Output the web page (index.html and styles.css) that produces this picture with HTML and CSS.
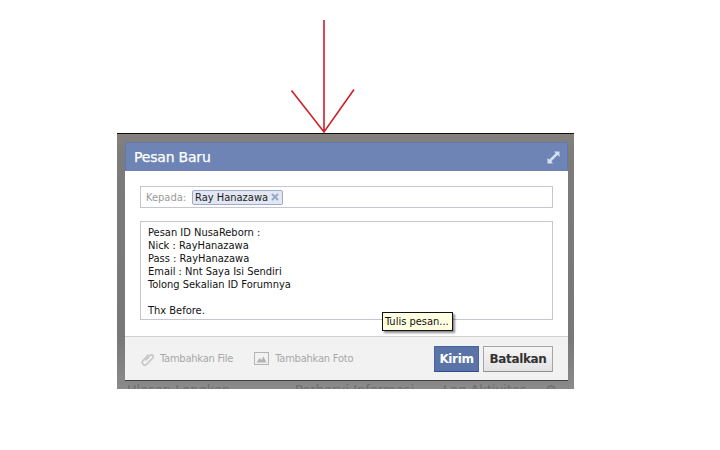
FILE: index.html
```html
<!DOCTYPE html>
<html lang="id">
<head>
<meta charset="utf-8">
<title>Pesan Baru</title>
<link rel="stylesheet" href="styles.css">
</head>
<body>
<svg class="arrow" width="720" height="140" viewBox="0 0 720 140">
  <path d="M324 20V132M291.500 90.500L324 132L354 89.500" fill="none" stroke="#cf1f28" stroke-width="1.600"/>
</svg>
<div class="backdrop">
  <div class="ghost"><span class="g1">Ulasan Lengkap</span><span class="g2">Perbarui Informasi</span><span class="g3">Log Aktivitas</span><span class="g4">&#9881;</span></div>
  <div class="dialog">
    <div class="head">
      <span class="title">Pesan Baru</span>
      <svg class="expand" width="13" height="13" viewBox="0 0 13 13">
        <path d="M7 0.500H12.500V6L10.600 4.100L4.400 10.300L6 12.500H0.500V7L2.400 8.600L8.700 2.300Z" fill="#d4dff2"/>
      </svg>
    </div>
    <div class="body">
      <div class="to">
        <span class="to-label">Kepada:</span>
        <span class="token">Ray Hanazawa<svg class="x" width="8" height="8" viewBox="0 0 8 8"><path d="M1 1L7 7M7 1L1 7" stroke="#98a8c6" stroke-width="2"/></svg></span>
      </div>
      <div class="msg">
        <div>Pesan ID NusaReborn :</div>
        <div>Nick : RayHanazawa</div>
        <div>Pass : RayHanazawa</div>
        <div>Email : Nnt Saya Isi Sendiri</div>
        <div>Tolong Sekalian ID Forumnya</div>
        <div class="blank"></div>
        <div>Thx Before.</div>
      </div>
    </div>
    <div class="foot">
      <span class="attach">
        <svg width="14" height="14" viewBox="0 0 14 14"><path d="M4.500 8.500L9 3.500C10 2.400 11.500 2.600 12 3.500C12.500 4.400 12.300 5.300 11.500 6.200L6 12C4.700 13.300 3 13.200 2 12.200C1 11.200 1 9.700 2.200 8.400L7.500 2.500" fill="none" stroke="#c4c4c4" stroke-width="1.500"/></svg>
        Tambahkan File
      </span>
      <span class="attach photo">
        <svg width="15" height="13" viewBox="0 0 15 13"><rect x="0.500" y="0.500" width="14" height="12" fill="#f2f2f2" stroke="#b4b4b4"/><path d="M2.500 10.500L5.500 6L7.500 8L9.500 4.500L12.500 10.500Z" fill="#b4b4b4"/></svg>
        Tambahkan Foto
      </span>
      <span class="spacer"></span>
      <button class="btn primary" type="button">Kirim</button>
      <button class="btn" type="button">Batalkan</button>
    </div>
    <div class="tip">Tulis pesan...</div>
  </div>
</div>
</body>
</html>
```
FILE: styles.css
```css
* { box-sizing: border-box; }
html, body { margin: 0; padding: 0; background: #fff; }
body {
  width: 720px;
  height: 450px;
  overflow: hidden;
  padding: 133px 0 0 117px;
  font-family: "DejaVu Sans", sans-serif;
  font-stretch: condensed;
  font-size: 11px;
  position: relative;
}
.arrow { position: absolute; left: 0; top: 0; z-index: 2; }
.backdrop {
  position: relative;
  width: 457px;
  height: 256px;
  padding: 8px 6px 8px 8px;
  background: #7b7b7b;
  background-image: linear-gradient(#84807c, #7b7b7b 12%, #787878 80%, #8a8a8a);
  border-top: 1px solid #111;
}
.ghost {
  position: absolute;
  left: 0;
  right: 0;
  bottom: 0;
  height: 7px;
  color: #6e6e6e;
  font-size: 13px;
  font-stretch: normal;
  line-height: 16px;
  overflow: hidden;
}
.ghost span { position: absolute; top: 0; white-space: nowrap; }
.g1 { left: 10px; }
.g2 { left: 178px; }
.g3 { left: 326px; }
.g4 { left: 428px; }
.dialog {
  position: relative;
  width: 443px;
  height: 239px;
  background: #fff;
  display: flex;
  flex-direction: column;
  border-bottom: 1px solid #3f3f3f;
}
.head {
  height: 29px;
  flex: none;
  background: #6d84b4;
  border: 1px solid #5f78ad;
  border-bottom: 0;
  display: flex;
  align-items: center;
  justify-content: space-between;
  padding: 0 7px 0 8px;
}
.title {
  color: #fff;
  font-size: 14px;
  font-stretch: normal;
  letter-spacing: -.2px;
  -webkit-text-stroke: .25px #fff;
}
.expand { display: block; }
.body {
  flex: 1;
  padding: 15px 15px 0;
  display: flex;
  flex-direction: column;
  gap: 13px;
}
.to {
  height: 22px;
  border: 1px solid #c4c7d1;
  display: flex;
  align-items: center;
  padding-left: 5px;
  gap: 6px;
}
.to-label { color: #9a9a9a; }
.token {
  height: 15px;
  padding: 0 3px 0 2px;
  background: #e2e7f3;
  border: 1px solid #9daccc;
  border-radius: 2px;
  color: #1b1b1b;
  display: flex;
  align-items: center;
  gap: 3px;
  line-height: 13px;
}
.x { display: block; }
.msg {
  height: 99px;
  border: 1px solid #c4c7d1;
  padding: 4px 7px;
  line-height: 13px;
  color: #111;
}
.blank { height: 13px; }
.foot {
  height: 44px;
  flex: none;
  background: #f2f2f2;
  border-top: 1px solid #cfd0d3;
  display: flex;
  align-items: center;
  padding: 0 15px 0 16px;
  color: #a8a8a8;
}
.attach { display: flex; align-items: center; gap: 5px; letter-spacing: -.2px; }
.photo { margin-left: 21px; gap: 6px; }
.spacer { flex: 1; }
.btn {
  height: 26px;
  padding: 0;
  width: 70px;
  font-family: "DejaVu Sans", sans-serif;
  font-size: 12px;
  font-weight: bold;
  letter-spacing: -.35px;
  color: #333;
  background: linear-gradient(#f6f6f6, #e3e3e3);
  border: 1px solid #a5a5a5;
  border-bottom-color: #8f8f8f;
  margin-left: 4px;
}
.primary {
  width: 45px;
  color: #fff;
  background: #5b74a8;
  border-color: #4a64a0 #4a64a0 #2f4a86;
}
.tip {
  position: absolute;
  left: 257px;
  top: 170px;
  width: 71px;
  height: 19px;
  background: #ffffe1;
  border: 1px solid #111;
  box-shadow: 2px 2px 2px rgba(0,0,0,.45);
  color: #111;
  line-height: 17px;
  padding-left: 2px;
  white-space: nowrap;
}
```
